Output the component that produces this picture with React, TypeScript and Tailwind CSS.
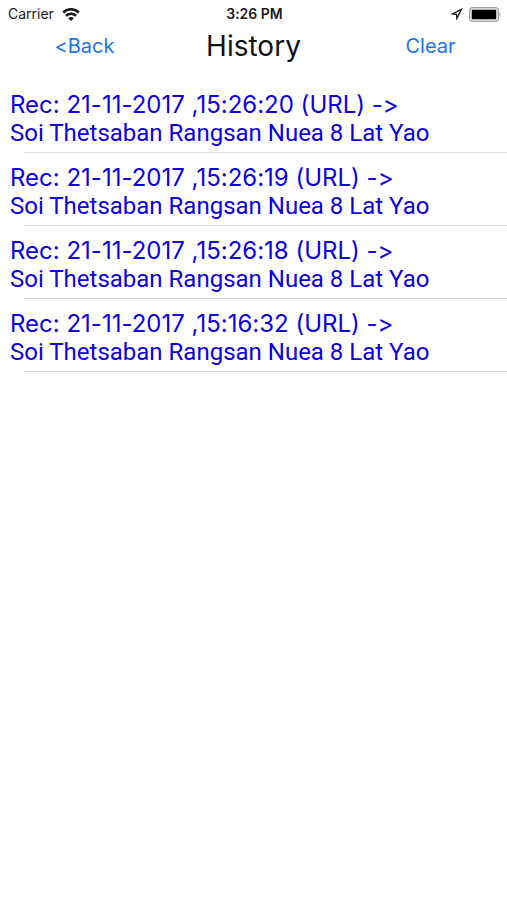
import { useState } from 'react';

interface HistoryEntry {
  id: number;
  date: string;
  time: string;
  source: string;
  address: string;
}

const INITIAL_ENTRIES: HistoryEntry[] = [
  { id: 4, date: '21-11-2017', time: '15:26:20', source: 'URL', address: 'Soi Thetsaban Rangsan Nuea 8 Lat Yao' },
  { id: 3, date: '21-11-2017', time: '15:26:19', source: 'URL', address: 'Soi Thetsaban Rangsan Nuea 8 Lat Yao' },
  { id: 2, date: '21-11-2017', time: '15:26:18', source: 'URL', address: 'Soi Thetsaban Rangsan Nuea 8 Lat Yao' },
  { id: 1, date: '21-11-2017', time: '15:16:32', source: 'URL', address: 'Soi Thetsaban Rangsan Nuea 8 Lat Yao' },
];

function WifiIcon() {
  return (
    <svg className="w-[18px] h-[13px]" viewBox="0 0 18 13" fill="none" stroke="currentColor" strokeWidth="2.6" aria-hidden="true">
      <path d="M1.2 4.5a11 11 0 0 1 15.6 0" />
      <path d="M4 7.8a7.1 7.1 0 0 1 10 0" />
      <path d="M9 13 6.2 10.2a3.9 3.9 0 0 1 5.6 0z" fill="currentColor" stroke="none" />
    </svg>
  );
}

function LocationIcon() {
  return (
    <svg className="w-3 h-3" viewBox="0 0 12 12" fill="none" stroke="currentColor" strokeWidth="1.3" strokeLinejoin="miter" aria-hidden="true">
      <path d="M10.4 1.3 1.4 6l4.1.4.3 4.2z" />
    </svg>
  );
}

function BatteryIcon() {
  return (
    <svg className="w-8 h-[15px]" viewBox="0 0 32 15" aria-hidden="true">
      <rect x="0.6" y="0.6" width="28.8" height="13.8" rx="3.4" fill="#e8e8e8" stroke="#a3a3a3" strokeWidth="1.2" />
      <rect x="2.8" y="2.8" width="24.4" height="9.4" rx="1" fill="#000" />
      <path d="M30.4 5.2c1.6.5 1.6 4.1 0 4.6z" fill="#a3a3a3" />
    </svg>
  );
}

function StatusBar() {
  return (
    <div className="grid grid-cols-3 items-center h-7 pl-2 pr-1.5 text-[#1a1a1a]">
      <div className="flex items-center gap-2 text-sm">
        <span>Carrier</span>
        <WifiIcon />
      </div>
      <span className="text-center text-sm font-semibold">3:26 PM</span>
      <div className="flex items-center justify-end gap-1.5">
        <LocationIcon />
        <BatteryIcon />
      </div>
    </div>
  );
}

function HistoryRow({ entry }: { entry: HistoryEntry }) {
  return (
    <li>
      <div className="px-2.5 pt-2.5 pb-1 text-2xl leading-[29px] text-[#0d00e0]">
        <p>
          Rec: {entry.date} ,{entry.time} ({entry.source}) -&gt;
        </p>
        <p className="font-['Roboto',sans-serif]">{entry.address}</p>
      </div>
      <div className="ml-6 h-px bg-[#dfdfe2]" />
    </li>
  );
}

export default function App() {
  const [entries, setEntries] = useState(INITIAL_ENTRIES);

  return (
    <div className="min-h-screen bg-white font-['Inter',sans-serif] [font-variant-ligatures:none]">
      <StatusBar />
      <header className="grid grid-cols-3 items-center h-9">
        <button type="button" className="justify-self-center text-xl text-[#1a74f0]">
          &lt;Back
        </button>
        <h1 className="text-center text-[28px] leading-9 text-[#111]">History</h1>
        <button type="button" onClick={() => setEntries([])} className="justify-self-center ml-4 text-xl text-[#1a74f0]">
          Clear
        </button>
      </header>
      <main className="pt-4">
        <ul>
          {entries.map((entry) => (
            <HistoryRow key={entry.id} entry={entry} />
          ))}
        </ul>
      </main>
    </div>
  );
}
